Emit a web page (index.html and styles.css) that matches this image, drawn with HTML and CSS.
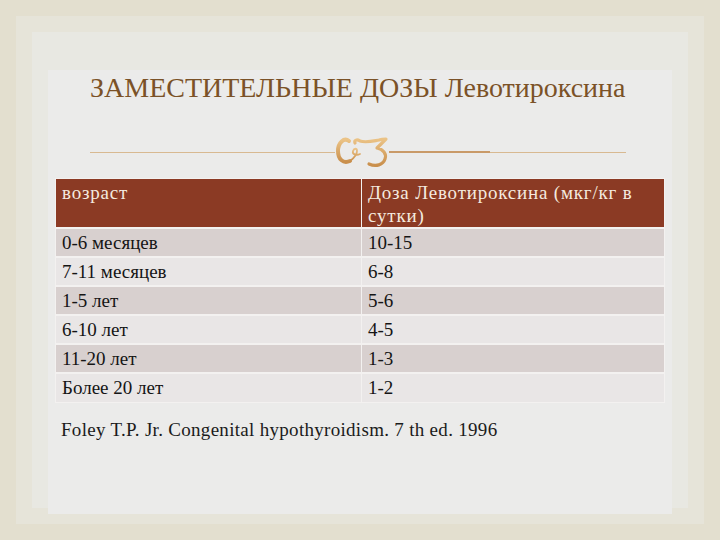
FILE: index.html
```html
<!DOCTYPE html>
<html>
<head>
<meta charset="utf-8">
<title>Заместительные дозы Левотироксина</title>
<link rel="stylesheet" href="styles.css">
</head>
<body>
<div class="frame f1">
  <div class="frame f2">
    <div class="frame f3">
      <main class="slide">
        <h1 class="title">ЗАМЕСТИТЕЛЬНЫЕ ДОЗЫ Левотироксина</h1>
        <div class="rule">
          <span class="line thin left"></span>
          <svg class="orn" width="54" height="34" viewBox="0 0 54 34" aria-hidden="true">
            <defs>
              <linearGradient id="g" x1="0" y1="0" x2="0" y2="1">
                <stop offset="0" stop-color="#ebc386"/>
                <stop offset="1" stop-color="#c98f4c"/>
              </linearGradient>
            </defs>
            <g fill="none" stroke="url(#g)" stroke-linecap="round" stroke-linejoin="round">
              <path d="M14 6 C9 2 3 8 3 16 C3 24 8 29 15 26" stroke-width="4"/>
              <path d="M15 26 C19 23 22 19 22 16 C22 13 19 13 18 16 C17 19 21 21 25 19" stroke-width="1.8"/>
              <path d="M20 8 C19 5 22 4 25 6 C31 8 38 6 44 5 C47 4 49 4 51 4 L42 13 C48 14 52 19 50 24 C48 30 41 32 34 29" stroke-width="3.2"/>
            </g>
          </svg>
          <span class="line thick"></span>
          <span class="line thin right"></span>
        </div>
        <table class="doses">
          <thead>
            <tr><th class="c1">возраст</th><th class="c2">Доза Левотироксина (мкг/кг в сутки)</th></tr>
          </thead>
          <tbody>
            <tr class="dark"><td>0-6 месяцев</td><td>10-15</td></tr>
            <tr class="light"><td>7-11 месяцев</td><td>6-8</td></tr>
            <tr class="dark"><td>1-5 лет</td><td>5-6</td></tr>
            <tr class="light"><td>6-10 лет</td><td>4-5</td></tr>
            <tr class="dark"><td>11-20 лет</td><td>1-3</td></tr>
            <tr class="light"><td>Более 20 лет</td><td>1-2</td></tr>
          </tbody>
        </table>
        <p class="cite">Foley T.P. Jr. Congenital hypothyroidism. 7 th ed. 1996</p>
      </main>
    </div>
  </div>
</div>
</body>
</html>
```
FILE: styles.css
```css
html, body {
  margin: 0;
  padding: 0;
}
body {
  width: 720px;
  height: 540px;
  overflow: hidden;
  font-family: "Liberation Serif", serif;
}
.frame {
  box-sizing: border-box;
  padding: 16px;
}
.f1 {
  width: 720px;
  height: 540px;
  background: #e3dfcf;
}
.f2 {
  height: 100%;
  background: #e6e4d9;
}
.f3 {
  height: 100%;
  background: #e8e8e2;
}
.slide {
  box-sizing: border-box;
  height: 100%;
  background: #ebebea;
  padding: 0 0 0 7px;
}
.title {
  margin: 22px 0 0 35px;
  font-weight: normal;
  font-size: 28px;
  line-height: 36px;
  color: #7b5227;
  white-space: nowrap;
}
.rule {
  display: flex;
  align-items: center;
  margin: 29px 0 0 35px;
  width: 536px;
  height: 34px;
}
.line {
  display: block;
  height: 1px;
  background: #d8b991;
}
.line.left {
  width: 245px;
}
.orn {
  flex: none;
  display: block;
}
.line.thick {
  width: 101px;
  height: 2px;
  background: #c99a68;
}
.line.right {
  flex: 1;
}
.doses {
  margin: 9px 0 0 0;
  width: 610px;
  border-collapse: collapse;
  font-size: 19px;
  color: #151515;
  border: 1px solid #f3f1f0;
}
.doses th {
  background: #8b3a24;
  color: #f4e9df;
  font-weight: normal;
  text-align: left;
  vertical-align: top;
  height: 49px;
  box-sizing: border-box;
  padding: 2px 6px 0;
  line-height: 23px;
  letter-spacing: 0.8px;
}
.doses th.c1 {
  width: 306px;
  border-right: 1px solid #f3f1f0;
}
.doses th.c2 {
  padding-right: 20px;
}
.doses td {
  height: 29px;
  box-sizing: border-box;
  padding: 0 6px;
  border-top: 2px solid #f3f1f0;
  line-height: 20px;
}
.doses td:first-child {
  border-right: 1px solid #f3f1f0;
}
.dark td {
  background: #d8d0cf;
}
.light td {
  background: #e9e6e6;
}
.cite {
  margin: 15px 0 0 6px;
  font-size: 19px;
  letter-spacing: 0.3px;
  line-height: 24px;
  color: #1b1b1b;
}
```
